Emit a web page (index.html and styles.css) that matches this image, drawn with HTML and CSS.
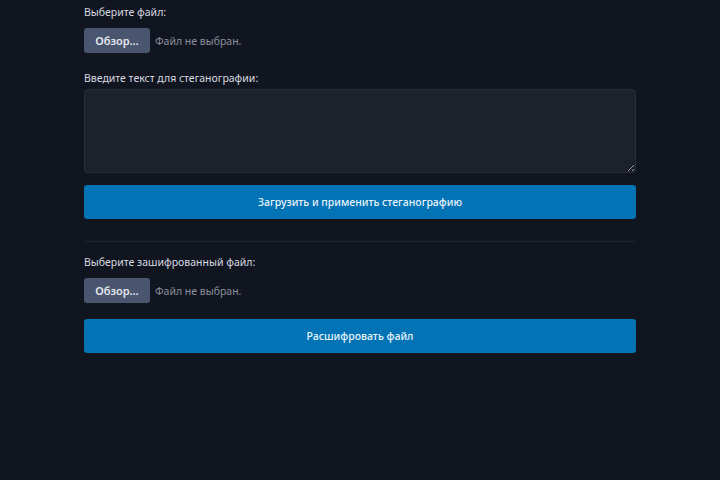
FILE: index.html
```html
<!DOCTYPE html>
<html lang="ru">
<head>
<meta charset="utf-8">
<link rel="stylesheet" href="styles.css">
</head>
<body>
<main class="page">
  <section class="block">
    <div class="label">Выберите файл:</div>
    <div class="file-row">
      <span class="file-btn">Обзор…</span>
      <span class="file-name">Файл не выбран.</span>
    </div>
    <div class="label label-text">Введите текст для стеганографии:</div>
    <textarea class="text-area"></textarea>
    <button class="primary">Загрузить и применить стеганографию</button>
  </section>
  <hr class="divider">
  <section class="block">
    <div class="label">Выберите зашифрованный файл:</div>
    <div class="file-row">
      <span class="file-btn">Обзор…</span>
      <span class="file-name">Файл не выбран.</span>
    </div>
    <button class="primary primary-2">Расшифровать файл</button>
  </section>
</main>
</body>
</html>
```
FILE: styles.css
```css
html, body {
  margin: 0;
  padding: 0;
  background: #111520;
  height: 100%;
}
body {
  font-family: "Noto Sans", "Open Sans", sans-serif;
  font-size: 10.5px;
  color: #d1d5db;
}
.page {
  width: 552px;
  margin: 0 auto;
  padding-top: 4px;
}
.block {
  display: flex;
  flex-direction: column;
}
.label {
  line-height: 16px;
  color: #d8dbe0;
  margin-bottom: 8px;
}
.file-row {
  display: flex;
  align-items: center;
  gap: 5px;
  height: 25px;
}
.file-btn {
  display: flex;
  align-items: center;
  justify-content: center;
  width: 66px;
  height: 25px;
  box-sizing: border-box;
  background: #4a5570;
  color: #e5e7eb;
  border-radius: 3px;
  font-weight: 600;
  font-size: 11px;
}
.file-name {
  color: #8a909c;
}
.label-text {
  margin-top: 17px;
  margin-bottom: 3px;
}
.text-area {
  display: block;
  box-sizing: border-box;
  width: 552px;
  height: 84px;
  background: #1d212c;
  border: 1px solid #272c38;
  border-radius: 3px;
  resize: vertical;
  margin: 0;
}
.primary {
  display: block;
  width: 552px;
  height: 34px;
  margin-top: 12px;
  border: none;
  border-radius: 3px;
  background: #0273b4;
  color: #eaf4fb;
  font-family: "Noto Sans", "Open Sans", sans-serif;
  font-size: 10.5px;
  font-weight: 500;
}
.primary-2 {
  margin-top: 16px;
}
.divider {
  border: none;
  border-top: 1px solid #1e2330;
  margin: 22px 0 12px;
}
```
